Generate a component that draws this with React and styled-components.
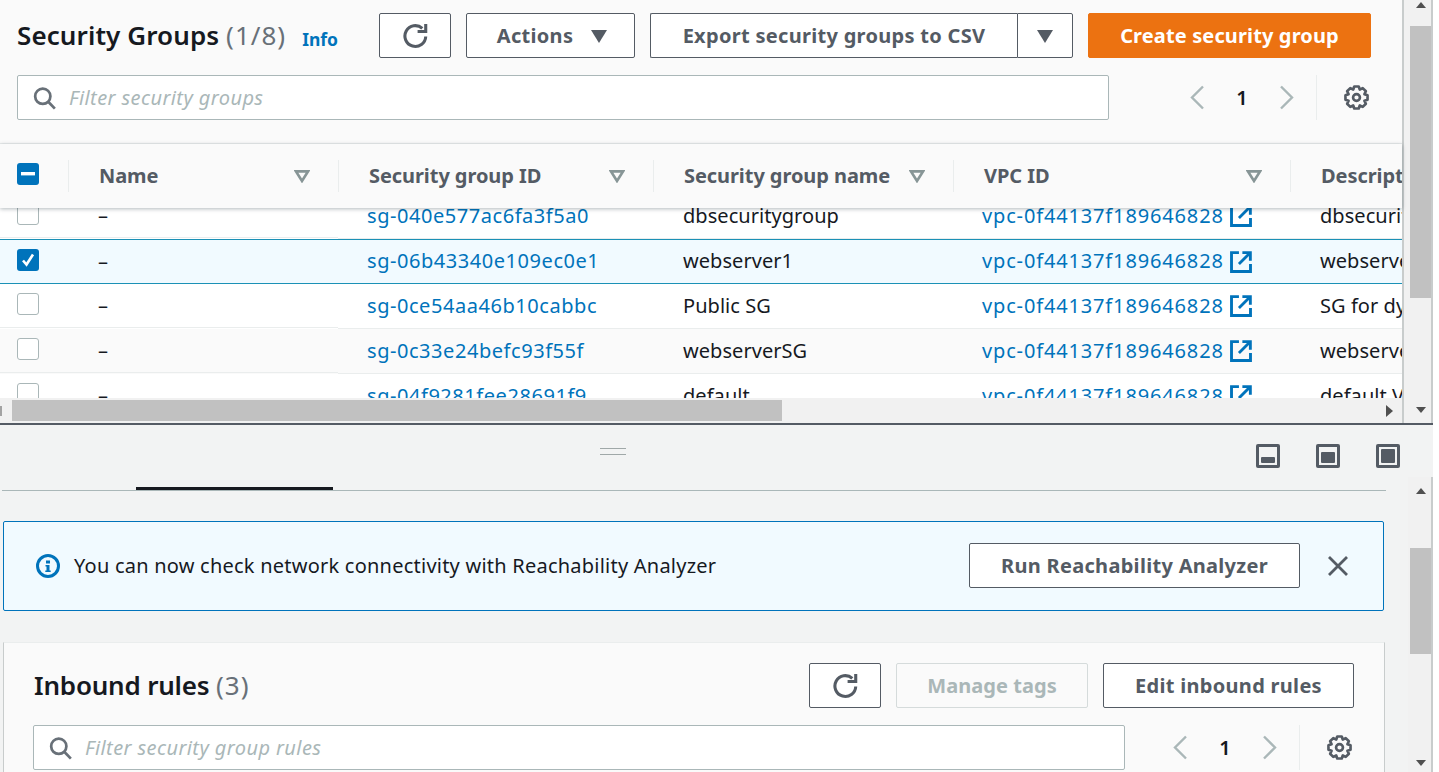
import React from 'react'
import styled, { createGlobalStyle } from 'styled-components'

const GlobalStyle = createGlobalStyle`
  html, body { margin: 0; padding: 0; background: #fff; overflow: hidden; }
  body { font-family: "Noto Sans", "Open Sans", sans-serif; font-size: 20px; color: #16191f; }
  * { box-sizing: border-box; }
`

const Page = styled.div`
  width: 1433px;
  height: 772px;
  display: flex;
  flex-direction: column;
  overflow: hidden;
`

const TopPane = styled.div`
  height: 423px;
  display: flex;
`

const TableColumn = styled.div`
  width: 1402px;
  display: flex;
  flex-direction: column;
  background: #fafafa;
`

const Toolbar = styled.div`
  height: 144px;
  padding: 13px 0 0 17px;
  border-bottom: 1px solid #eaeded;
`

const TitleRow = styled.div`
  display: flex;
  align-items: center;
  gap: 15px;
`

const Heading = styled.div`
  flex: 1;
  margin-top: -2px;
  padding-left: ${p => p.$inset || 0}px;
  font-size: 26px;
  font-weight: 600;
  letter-spacing: ${p => p.$ls}px;
  color: #16191f;
  white-space: nowrap;

  span {
    font-weight: 400;
    letter-spacing: 1px;
    color: #687078;
  }
`

const Info = styled.a`
  display: inline-block;
  vertical-align: -1px;
  margin-left: 16px;
  font-size: 17.5px;
  font-weight: 700;
  letter-spacing: 0;
  color: #0073bb;
`

const Button = styled.button`
  width: ${p => p.$w}px;
  height: 45px;
  padding: 0 0 0 ${p => p.$pad || 0}px;
  flex: none;
  display: flex;
  align-items: center;
  justify-content: center;
  gap: ${p => p.$gap || 0}px;
  border: 1px solid #545b64;
  border-radius: 2px;
  background: #fff;
  color: #545b64;
  font-family: inherit;
  font-size: 20px;
  font-weight: 700;
  letter-spacing: 0.3px;
`

const MutedButton = styled(Button)`
  border-color: #d5dbdb;
  color: #aab7b8;
  background: #fafafa;
  letter-spacing: 0.05px;
`

const PrimaryButton = styled(Button)`
  border-color: #ec7211;
  background: #ec7211;
  color: #fff;
  letter-spacing: 0.13px;
`

const Split = styled.div`
  display: flex;
  flex: none;

  ${Button}:first-child {
    border-right: 0;
    border-radius: 2px 0 0 2px;
  }
  ${Button}:last-child {
    border-radius: 0 2px 2px 0;
  }
`

const TopActions = styled.div`
  display: flex;
  gap: 15px;
  margin-right: ${p => p.$right}px;
`

const FilterRow = styled.div`
  display: flex;
  align-items: stretch;
  height: 45px;
  margin-top: 17px;
`

const FilterBox = styled.div`
  width: 1092px;
  flex: none;
  display: flex;
  align-items: center;
  gap: 13px;
  padding-left: 15px;
  background: #fff;
  border: 1px solid #aab7b8;
  border-radius: 2px;
  font-size: 20px;
  font-style: italic;
  letter-spacing: 0.41px;
  color: #aab7b8;
`

const Pager = styled.div`
  display: flex;
  align-items: center;
  margin-left: ${p => p.$left}px;
`

const PageArrow = styled.div`
  width: 30px;
  display: flex;
  justify-content: center;
`

const PageNumber = styled.div`
  width: 60px;
  text-align: center;
  font-weight: 600;
  color: #16191f;
`

const PrefCell = styled.div`
  width: 80px;
  height: 45px;
  margin-left: 14px;
  display: flex;
  align-items: center;
  justify-content: center;
  border-left: 1px solid #eaeded;
`

const grid = '68px 270px 315px 300px 337px 112px'

const HeadRow = styled.div`
  position: relative;
  z-index: 1;
  height: 64px;
  flex: none;
  display: grid;
  grid-template-columns: ${grid};
  background: #fafafa;
  box-shadow: 0 1px 4px rgba(0, 28, 36, 0.3);
  overflow: hidden;
`

const HeadCell = styled.div`
  display: flex;
  align-items: center;
  justify-content: space-between;
  height: 32px;
  margin-top: 16px;
  padding: 0 28px 2px 30px;
  border-left: 1px solid #eaeded;
  font-weight: 700;
  letter-spacing: -0.07px;
  color: #545b64;
  white-space: nowrap;

  > svg {
    margin-top: 2px;
  }
  &:first-child {
    border-left: 0;
    padding: 0 0 2px 17px;
  }
  &:last-child {
    padding-right: 0;
  }
`

const BodyWindow = styled.div`
  flex: 1;
  background: #fff;
  overflow: hidden;
`

const RowList = styled.div`
  margin-top: -14px;
`

const Row = styled.div`
  display: grid;
  grid-template-columns: ${grid};
  height: 45px;
  background: ${p => (p.$selected ? '#f1faff' : p.$alt ? '#fafafa' : '#fff')};
  ${p => p.$selected && 'border-top: 1px solid #1b91b6; border-bottom: 1px solid #1b91b6;'}
`

const Cell = styled.div`
  display: flex;
  align-items: center;
  overflow: hidden;
  white-space: nowrap;
  padding-left: ${p => p.$pad || 0}px;
  padding-bottom: ${p => (p.$lead ? 0 : 2)}px;
  margin-bottom: ${p => (p.$lead && !p.$selected ? 1 : 0)}px;
  border-bottom: ${p => (p.$selected ? '0' : '1px solid #eaeded')};
  letter-spacing: 0.05px;
`

const IdLink = styled.a`
  color: #0073bb;
  margin-right: 6px;
  letter-spacing: ${p => p.$ls}px;
`

const Checkbox = styled.div`
  width: 22px;
  height: 22px;
  flex: none;
  display: flex;
  align-items: center;
  justify-content: center;
  margin-top: -3px;
  border-radius: 3px;
  background: ${p => (p.$on ? '#0073bb' : '#fff')};
  border: ${p => (p.$on ? '0' : '1.5px solid #aab7b8')};
`

const HScroll = styled.div`
  height: 25px;
  flex: none;
  display: flex;
  align-items: center;
  background: #f1f1f1;
`

const HStub = styled.div`
  width: 2px;
  height: 10px;
  background: #a3a3a3;
`

const HThumb = styled.div`
  width: 770px;
  height: 21px;
  margin-left: 10px;
  background: #c1c1c1;
`

const RightArrow = styled.div`
  margin-left: auto;
  margin-right: 9px;
  width: 0;
  height: 0;
  border-left: 7px solid #505050;
  border-top: 6px solid transparent;
  border-bottom: 6px solid transparent;
`

const VScroll = styled.div`
  width: ${p => p.$w}px;
  flex: none;
  display: flex;
  flex-direction: column;
  align-items: flex-end;
  margin-top: ${p => p.$top || 0}px;
  padding-top: ${p => p.$arrowTop}px;
  padding-bottom: ${p => p.$arrowBottom}px;
  background: #f1f1f1;
  border-left: ${p => (p.$edge ? '2px solid #c8cccc' : '0')};
  border-right: 2px solid #c8cccc;
`

const UpArrow = styled.div`
  width: 0;
  height: 0;
  margin-right: 5px;
  border-bottom: 6px solid #505050;
  border-left: 5.5px solid transparent;
  border-right: 5.5px solid transparent;
`

const DownArrow = styled(UpArrow)`
  margin-top: auto;
  border-bottom: 0;
  border-top: 6px solid #505050;
`

const VThumb = styled.div`
  width: 21px;
  height: ${p => p.$h}px;
  margin-top: ${p => p.$top}px;
  background: #c1c1c1;
`

const Divider = styled.div`
  height: 2px;
  flex: none;
  background: #545b64;
`

const LowerPane = styled.div`
  flex: 1;
  display: flex;
  min-height: 0;
  background: #f2f3f3;
`

const LowerMain = styled.div`
  width: 1408px;
  flex: none;
  overflow: hidden;
`

const PaneHead = styled.div`
  height: 66px;
  margin-left: 2px;
  margin-right: 22px;
  display: grid;
  grid-template-columns: 134px 197px 1fr;
  border-bottom: 1px solid #aab7b8;
`

const ActiveTab = styled.div`
  grid-column: 2;
  align-self: end;
  height: 3px;
  background: #16191f;
`

const PaneTools = styled.div`
  grid-column: 3;
  display: grid;
  grid-template-columns: 267px 26px 1fr;
  align-items: start;
  padding-top: 19px;
`

const Handle = styled.div`
  grid-column: 2;
  width: 26px;
  height: 7px;
  margin-top: 4px;
  border-top: 1px solid #a0a8a8;
  border-bottom: 1px solid #a0a8a8;
`

const SizeIcons = styled.div`
  grid-column: 3;
  justify-self: end;
  display: flex;
  gap: 36px;
  margin-right: -14px;
`

const Flash = styled.div`
  height: 90px;
  margin: 30px 24px 0 3px;
  display: flex;
  align-items: center;
  padding: 0 34px 1px 32px;
  background: #f1faff;
  border: 1px solid #0073bb;
  border-radius: 2px;
`

const FlashText = styled.div`
  flex: 1;
  margin-left: 14px;
  letter-spacing: 0.23px;
  color: #16191f;
`

const CloseIcon = styled.svg`
  margin-left: 27px;
  width: 22px;
  height: 22px;
`

const Card = styled.div`
  margin: 31px 23px 0 3px;
  height: 140px;
  padding: 20px 30px 0 29px;
  background: #fafafa;
  border-top: 1px solid #eaeded;
  border-left: 1px solid #c8cccc;
  border-right: 1px solid #c8cccc;
`

const blue = '#0073bb'
const grey = '#545b64'

const Refresh = () => (
  <svg width="26" height="26" viewBox="0 0 16 16" fill="none" stroke={grey} strokeWidth="1.9">
    <path d="M14.6 8.3a6.4 6.4 0 1 1-2.1-5" />
    <path d="M9.6 5.2h5V.6" />
  </svg>
)

const Caret = () => (
  <svg width="18" height="14" viewBox="0 0 18 14">
    <path d="M1 1h16l-8 13z" fill={grey} />
  </svg>
)

const FilterMark = () => (
  <svg width="16" height="13" viewBox="0 0 16 13" fill="none" stroke="#879596" strokeWidth="2.6">
    <path d="M2 1.4h12L8 11z" />
  </svg>
)

const Search = () => (
  <svg width="23" height="24" viewBox="0 0 16 16" fill="none" stroke="#687078" strokeWidth="1.9">
    <circle cx="6.8" cy="6.8" r="5.3" />
    <path d="M10.6 10.6 15.2 15.4" />
  </svg>
)

const Chevron = ({ dir }) => (
  <svg width="16" height="25" viewBox="0 0 16 25" fill="none" stroke="#aab7b8" strokeWidth="2.4">
    <path d={dir === 'left' ? 'M14 1.5 3 12.5l11 11' : 'M2 1.5l11 11-11 11'} />
  </svg>
)

// outline of an eight tooth cog, points worked out once at render
const cogPath = () => {
  const pts = []
  for (let i = 0; i < 8; i++) {
    const a = (i * Math.PI) / 4
    ;[[-0.39, 5.5], [-0.2, 7.2], [0.2, 7.2], [0.39, 5.5]].forEach(([o, r]) => {
      pts.push(`${(8 + r * Math.sin(a + o)).toFixed(2)} ${(8 - r * Math.cos(a + o)).toFixed(2)}`)
    })
  }
  return `M${pts.join('L')}z`
}

const Cog = () => (
  <svg width="25" height="25" viewBox="0 0 16 16" fill="none" stroke={grey} strokeWidth="1.7" strokeLinejoin="round">
    <path d={cogPath()} />
    <circle cx="8" cy="8" r="2.2" />
  </svg>
)

const ExternalSvg = styled.svg`
  flex: none;
  margin-top: 2px;
`

const ExternalIcon = () => (
  <ExternalSvg width="22" height="22" viewBox="0 0 16 16" fill="none" stroke={blue} strokeWidth="2.1">
    <path d="M6.5 1.2H1.1v13.7h13.8V9.5" />
    <path d="M9 1.2h5.8V7" />
    <path d="M14.5 1.5 6.5 9.5" />
  </ExternalSvg>
)

const Minus = () => (
  <svg width="14" height="4" viewBox="0 0 14 4">
    <rect width="14" height="3.4" fill="#fff" />
  </svg>
)

const Check = () => (
  <svg width="14" height="14" viewBox="0 0 14 14" fill="none" stroke="#fff" strokeWidth="2.6">
    <path d="M2 7.5l3.5 4L12 1.5" />
  </svg>
)

const SizeIcon = ({ fromY }) => (
  <svg width="24" height="24" viewBox="0 0 24 24">
    <rect width="24" height="24" rx="2" fill={grey} />
    <rect x="3" y="3" width="18" height="18" fill="#f2f3f3" />
    <rect x="5" y={fromY} width="14" height={19 - fromY} rx="1" fill={grey} />
  </svg>
)

const InfoCircle = () => (
  <svg width="24" height="24" viewBox="0 0 24 24" fill="none">
    <circle cx="12" cy="12" r="10.5" stroke={blue} strokeWidth="3" />
    <rect x="10" y="6.5" width="4" height="3" fill={blue} />
    <path d="M9.5 11h4v5.5h1.2v1.5H9.3v-1.5h1.2v-4H9.5z" fill={blue} />
  </svg>
)

const columns = ['Security group ID', 'Security group name', 'VPC ID']

const rows = [
  { id: 'sg-040e577ac6fa3f5a0', group: 'dbsecuritygroup', desc: 'dbsecurityg' },
  { id: 'sg-06b43340e109ec0e1', group: 'webserver1', desc: 'webserver1', selected: true },
  { id: 'sg-0ce54aa46b10cabbc', group: 'Public SG', desc: 'SG for dyn' },
  { id: 'sg-0c33e24befc93f55f', group: 'webserverSG', desc: 'webserverS', alt: true },
  { id: 'sg-04f9281fee28691f9', group: 'default', desc: 'default VPC' },
]

const App = () => (
  <Page>
    <GlobalStyle />
    <TopPane>
      <TableColumn>
        <Toolbar>
          <TitleRow>
            <Heading $ls={0.1}>
              Security Groups <span>(1/8)</span>
              <Info>Info</Info>
            </Heading>
            <TopActions $right={31}>
              <Button $w={72}><Refresh /></Button>
              <Button $w={169} $gap={17} $pad={4}>Actions <Caret /></Button>
              <Split>
                <Button $w={367}>Export security groups to CSV</Button>
                <Button $w={56}><Caret /></Button>
              </Split>
              <PrimaryButton $w={283}>Create security group</PrimaryButton>
            </TopActions>
          </TitleRow>
          <FilterRow>
            <FilterBox><Search />Filter security groups</FilterBox>
            <Pager $left={73}>
              <PageArrow><Chevron dir="left" /></PageArrow>
              <PageNumber>1</PageNumber>
              <PageArrow><Chevron dir="right" /></PageArrow>
              <PrefCell><Cog /></PrefCell>
            </Pager>
          </FilterRow>
        </Toolbar>
        <HeadRow>
          <HeadCell><Checkbox $on><Minus /></Checkbox></HeadCell>
          <HeadCell>Name <FilterMark /></HeadCell>
          {columns.map(c => (
            <HeadCell key={c}>{c} <FilterMark /></HeadCell>
          ))}
          <HeadCell>Description</HeadCell>
        </HeadRow>
        <BodyWindow>
          <RowList>
            {rows.map(r => (
              <Row key={r.id} $selected={r.selected} $alt={r.alt}>
                <Cell $pad={17} $lead $selected={r.selected}>
                  <Checkbox $on={r.selected}>{r.selected && <Check />}</Checkbox>
                </Cell>
                <Cell $pad={30} $lead $selected={r.selected}>–</Cell>
                <Cell $pad={29} $selected={r.selected}><IdLink $ls={0.55}>{r.id}</IdLink></Cell>
                <Cell $pad={30} $selected={r.selected}>{r.group}</Cell>
                <Cell $pad={29} $selected={r.selected}>
                  <IdLink $ls={0.85}>vpc-0f44137f189646828</IdLink>
                  <ExternalIcon />
                </Cell>
                <Cell $pad={30} $selected={r.selected}>{r.desc}</Cell>
              </Row>
            ))}
          </RowList>
        </BodyWindow>
        <HScroll>
          <HStub />
          <HThumb />
          <RightArrow />
        </HScroll>
      </TableColumn>
      <VScroll $w={31} $edge $arrowTop={2} $arrowBottom={10}>
        <UpArrow />
        <VThumb $h={272} $top={18} />
        <DownArrow />
      </VScroll>
    </TopPane>
    <Divider />
    <LowerPane>
      <LowerMain>
        <PaneHead>
          <ActiveTab />
          <PaneTools>
            <Handle />
            <SizeIcons>
              <SizeIcon fromY={13} />
              <SizeIcon fromY={8} />
              <SizeIcon fromY={5} />
            </SizeIcons>
          </PaneTools>
        </PaneHead>
        <Flash>
          <InfoCircle />
          <FlashText>You can now check network connectivity with Reachability Analyzer</FlashText>
          <Button $w={331}>Run Reachability Analyzer</Button>
          <CloseIcon viewBox="0 0 22 22" fill="none" stroke={grey} strokeWidth="2.8">
            <path d="M2 2l18 18M20 2 2 20" />
          </CloseIcon>
        </Flash>
        <Card>
          <TitleRow>
            <Heading $ls={-0.2} $inset={1}>Inbound rules <span>(3)</span></Heading>
            <Button $w={72}><Refresh /></Button>
            <MutedButton $w={192}>Manage tags</MutedButton>
            <Button $w={251}>Edit inbound rules</Button>
          </TitleRow>
          <FilterRow>
            <FilterBox><Search />Filter security group rules</FilterBox>
            <Pager $left={40}>
              <PageArrow><Chevron dir="left" /></PageArrow>
              <PageNumber>1</PageNumber>
              <PageArrow><Chevron dir="right" /></PageArrow>
              <PrefCell><Cog /></PrefCell>
            </Pager>
          </FilterRow>
        </Card>
      </LowerMain>
      <VScroll $w={25} $top={52} $arrowTop={11} $arrowBottom={6}>
        <UpArrow />
        <VThumb $h={106} $top={54} />
        <DownArrow />
      </VScroll>
    </LowerPane>
  </Page>
)

export default App
